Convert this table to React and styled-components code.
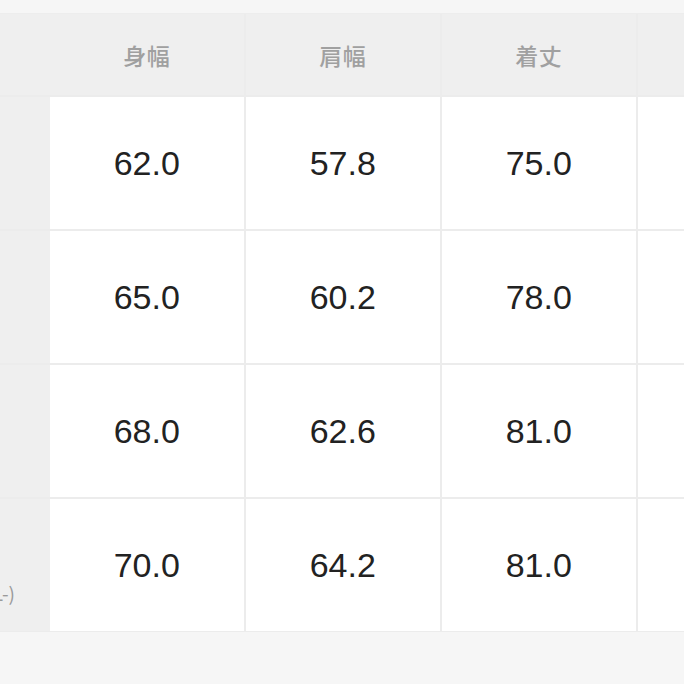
import React from "react";
import styled, { createGlobalStyle } from "styled-components";

const Global = createGlobalStyle`
  html, body { margin: 0; padding: 0; background: #f5f5f5; }
  body { width: 684px; height: 684px; overflow: hidden; }
`;

const Page = styled.div`
  width: 684px;
  height: 684px;
  overflow: hidden;
  background: #f6f6f6;
  padding-top: 14px;
  box-sizing: border-box;
`;

const TopLine = styled.div`
  height: 1px;
  margin-top: -1px;
  background: #ededed;
`;

const Table = styled.div`
  display: grid;
  grid-template-columns: 155.5px repeat(4, 193.5px);
  grid-template-rows: 81px repeat(4, 132px);
  column-gap: 2.5px;
  row-gap: 2px;
  margin-left: -108px;
  width: max-content;
  background: #ececec;
  border-bottom: 1px solid #ececec;
`;

const HeadCell = styled.div`
  background: #efefef;
  display: flex;
  align-items: center;
  justify-content: center;
  font-family: "Noto Sans CJK JP", "Noto Sans", sans-serif;
  font-weight: 500;
  font-size: 23px;
  color: #a0a0a0;
  letter-spacing: 0.5px;
  margin-right: ${(p) => (p.$join ? "-2.5px" : "0")};
`;

const LabelCell = styled.div`
  background: #efefef;
  display: flex;
  flex-direction: column;
  align-items: flex-end;
  justify-content: center;
  padding-right: 35px;
  padding-top: ${(p) => (p.$two ? "30px" : "0")};
  box-sizing: border-box;
  margin-right: -2.5px;
  font-family: "Noto Sans CJK JP", "Noto Sans", sans-serif;
  font-size: 19px;
  line-height: 26px;
  color: #9a9a9a;
  white-space: nowrap;
`;

const Hidden = styled.span`
  visibility: ${(p) => (p.$hide ? "hidden" : "visible")};
`;

const ValueCell = styled.div`
  background: #ffffff;
  display: flex;
  align-items: center;
  justify-content: center;
  font-family: "Liberation Sans", Arial, sans-serif;
  font-size: 34px;
  color: #222222;
`;

const headers = ["身幅", "肩幅", "着丈", ""];
const rows = [
  { label: ["S"], values: ["62.0", "57.8", "75.0", ""] },
  { label: ["M"], values: ["65.0", "60.2", "78.0", ""] },
  { label: ["L"], values: ["68.0", "62.6", "81.0", ""] },
  { label: ["XL", "(2XL-)"], values: ["70.0", "64.2", "81.0", ""] },
];

export default function App() {
  return (
    <>
      <Global />
      <Page>
        <TopLine />
        <Table>
          <HeadCell $join />
          {headers.map((h, i) => (
            <HeadCell key={i}>{h}</HeadCell>
          ))}
          {rows.map((r, i) => (
            <React.Fragment key={i}>
              <LabelCell $two={r.label.length > 1}>
                {r.label.length > 1 ? (
                  <>
                    <Hidden $hide>{r.label[0]}</Hidden>
                    <span>{r.label[1]}</span>
                  </>
                ) : (
                  <Hidden $hide>{r.label[0]}</Hidden>
                )}
              </LabelCell>
              {r.values.map((v, j) => (
                <ValueCell key={j}>{v}</ValueCell>
              ))}
            </React.Fragment>
          ))}
        </Table>
      </Page>
    </>
  );
}
